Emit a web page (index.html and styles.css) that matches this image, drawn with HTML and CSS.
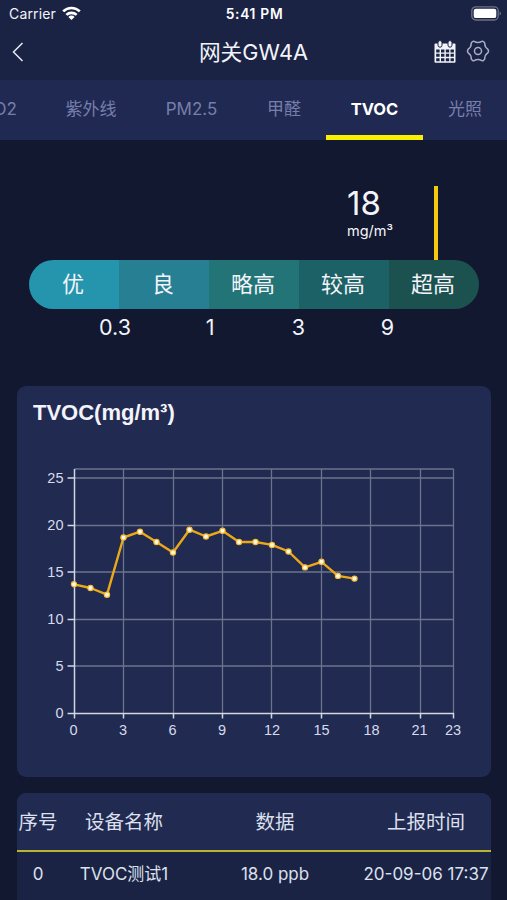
FILE: index.html
```
<!DOCTYPE html>
<html lang="zh-CN">
<head>
    <meta charset="UTF-8">
    <meta name="viewport" content="width=device-width, initial-scale=1.0">
    <title>网关GW4A</title>
    <link rel="stylesheet" href="styles.css">
</head>
<body>
    <header class="header">
        <div class="status-bar">
            <div class="carrier">
                <span>Carrier</span>
                <svg class="wifi" width="19" height="14" viewBox="0 0 19 14" fill="none" stroke="#fff" stroke-width="2.7">
                    <path d="M1.2 5.4a11.8 11.8 0 0 1 16.6 0"/>
                    <path d="M4.4 8.9a7.3 7.3 0 0 1 10.2 0"/>
                    <path d="M9.5 14 6.4 10.9a4.4 4.4 0 0 1 6.2 0z" fill="#fff" stroke="none"/>
                </svg>
            </div>
            <span class="time">5:41 PM</span>
            <svg class="battery" width="31" height="15" viewBox="0 0 31 15">
                <rect x=".8" y=".8" width="26.4" height="13.2" rx="4" fill="none" stroke="#6d7289" stroke-width="1.3"/>
                <rect x="2.7" y="2.7" width="22.6" height="9.4" rx="2.2" fill="#fff"/>
                <path d="M28.6 5.2c1.8.7 1.8 3.7 0 4.4z" fill="#6d7289"/>
            </svg>
        </div>
        <div class="nav-bar">
            <svg class="back" width="12" height="20" viewBox="0 0 12 20" fill="none" stroke="#e8eaf2" stroke-width="1.5">
                <path d="M10.5 1 1.5 10l9 9"/>
            </svg>
            <h1>网关GW4A</h1>
            <div class="actions">
                <svg width="22" height="24" viewBox="0 0 22 24">
                    <path d="M1.5 3.5h19a1 1 0 0 1 1 1v17.3a1 1 0 0 1-1 1h-19a1 1 0 0 1-1-1V4.5a1 1 0 0 1 1-1z" fill="#f3f4fa"/>
                    <g fill="#1b2344">
                        <path d="M2.2 9.4h3.4v3H2.2zM7 9.4h3.4v3H7zM11.8 9.4h3.4v3h-3.4zM16.5 9.4h3.4v3h-3.4z"/>
                        <path d="M2.2 13.8h3.4v3H2.2zM7 13.8h3.4v3H7zM11.8 13.8h3.4v3h-3.4zM16.5 13.8h3.4v3h-3.4z"/>
                        <path d="M2.2 18.2h3.4v3H2.2zM7 18.2h3.4v3H7zM11.8 18.2h3.4v3h-3.4zM16.5 18.2h3.4v3h-3.4z"/>
                    </g>
                    <g fill="#f3f4fa" stroke="#1b2344">
                        <rect x="4" y=".6" width="4" height="6.6" rx="2"/>
                        <rect x="14" y=".6" width="4" height="6.6" rx="2"/>
                    </g>
                </svg>
                <svg class="gear" width="24" height="24" viewBox="0 0 24 24" fill="none" stroke="#a9adc6" stroke-width="1.5" stroke-linejoin="round">
                    <path d="M6.5 2.6Q7.3 2 8.2 2.4Q12 4.6 15.8 2.4Q16.7 2 17.5 2.6Q19 3.5 18.8 5Q18.9 8.2 21.8 10.2Q23.2 12 21.8 13.8Q18.9 15.8 18.8 19Q19 20.5 17.5 21.4Q16.7 22 15.8 21.6Q12 19.4 8.2 21.6Q7.3 22 6.5 21.4Q5 20.5 5.2 19Q5.1 15.8 2.2 13.8Q.8 12 2.2 10.2Q5.1 8.2 5.2 5Q5 3.5 6.5 2.6z"/>
                    <circle cx="12" cy="12" r="3.5"/>
                </svg>
            </div>
        </div>
    </header>

    <nav class="tabs">
        <div class="tab">CO2</div>
        <div class="tab">紫外线</div>
        <div class="tab">PM2.5</div>
        <div class="tab">甲醛</div>
        <div class="tab active">TVOC</div>
        <div class="tab">光照</div>
    </nav>

    <section class="gauge">
        <div class="reading">
            <div class="reading-text">
                <div class="value">18</div>
                <div class="unit">mg/m³</div>
            </div>
            <div class="marker"></div>
        </div>
        <div class="levels">
            <div class="level level-1">优</div>
            <div class="level level-2">良</div>
            <div class="level level-3">略高</div>
            <div class="level level-4">较高</div>
            <div class="level level-5">超高</div>
        </div>
        <div class="limits">
            <span>0.3</span>
            <span>1</span>
            <span>3</span>
            <span>9</span>
        </div>
    </section>

    <section class="card chart-card">
        <h2>TVOC(mg/m³)</h2>
        <svg class="chart" width="474" height="300" viewBox="0 0 474 300">
            <g transform="translate(57.5 19)">
                <!-- grid -->
                <path class="grid" d="M49 0v244M99 0v244M148 0v244M197 0v244M247 0v244M296 0v244M346 0v244M379 0v244M0 0h379M0 9h379M0 56.5h379M0 103h379M0 150.5h379M0 197h379"/>
                <!-- axes -->
                <path class="axis" d="M0 0v249.5M-7 244.5h386.5M-7 9H0M-7 56.5H0M-7 103H0M-7 150.5H0M-7 197H0M49 244v5.5M99 244v5.5M148 244v5.5M197 244v5.5M247 244v5.5M296 244v5.5M346 244v5.5M379 244v5.5"/>
                <g class="label label-y">
                    <text x="-11" y="14">25</text>
                    <text x="-11" y="61">20</text>
                    <text x="-11" y="108">15</text>
                    <text x="-11" y="155">10</text>
                    <text x="-11" y="202">5</text>
                    <text x="-11" y="249">0</text>
                </g>
                <g class="label label-x">
                    <text x="-1" y="266">0</text>
                    <text x="48.5" y="266">3</text>
                    <text x="98" y="266">6</text>
                    <text x="147.5" y="266">9</text>
                    <text x="197.5" y="266">12</text>
                    <text x="247" y="266">15</text>
                    <text x="297" y="266">18</text>
                    <text x="345" y="266">21</text>
                    <text x="378.5" y="266">23</text>
                </g>
                <polyline class="line" points="-.5,115.3 16,119 32.5,125.7 49,68.5 65.5,62.7 82,73 98.5,83.5 115,60.7 131.5,67.5 148,61.8 164.5,73 181,73 197.5,75.9 214,82.5 230.5,98.4 247,92.8 263.5,106.9 280,109.6"/>
                <g class="dots">
                    <circle cx="-.5" cy="115.3" r="2.6"/>
                    <circle cx="16" cy="119" r="2.6"/>
                    <circle cx="32.5" cy="125.7" r="2.6"/>
                    <circle cx="49" cy="68.5" r="2.6"/>
                    <circle cx="65.5" cy="62.7" r="2.6"/>
                    <circle cx="82" cy="73" r="2.6"/>
                    <circle cx="98.5" cy="83.5" r="2.6"/>
                    <circle cx="115" cy="60.7" r="2.6"/>
                    <circle cx="131.5" cy="67.5" r="2.6"/>
                    <circle cx="148" cy="61.8" r="2.6"/>
                    <circle cx="164.5" cy="73" r="2.6"/>
                    <circle cx="181" cy="73" r="2.6"/>
                    <circle cx="197.5" cy="75.9" r="2.6"/>
                    <circle cx="214" cy="82.5" r="2.6"/>
                    <circle cx="230.5" cy="98.4" r="2.6"/>
                    <circle cx="247" cy="92.8" r="2.6"/>
                    <circle cx="263.5" cy="106.9" r="2.6"/>
                    <circle cx="280" cy="109.6" r="2.6"/>
                </g>
            </g>
        </svg>
    </section>

    <section class="card table">
        <div class="row table-head">
            <div>序号</div>
            <div>设备名称</div>
            <div>数据</div>
            <div>上报时间</div>
        </div>
        <div class="row">
            <div>0</div>
            <div>TVOC测试1</div>
            <div>18.0 ppb</div>
            <div>20-09-06 17:37</div>
        </div>
    </section>
</body>
</html>
```
FILE: styles.css
```
* {
    box-sizing: border-box;
}

body {
    margin: 0;
    height: 900px;
    overflow: hidden;
    background-color: #121830;
    color: #f3f4fa;
    font-family: Inter, "Noto Sans CJK SC", sans-serif;
}

svg {
    display: block;
    flex: none;
}

/* Header */
.header {
    height: 80px;
    background-color: #1b2344;
}

.status-bar {
    display: grid;
    grid-template-columns: 1fr auto 1fr;
    align-items: center;
    height: 27px;
    padding: 0 5px 0 9px;
    font-size: 14px;
}

.carrier {
    display: flex;
    align-items: center;
    gap: 6px;
    letter-spacing: 0.15px;
}

.wifi {
    margin-top: -2px;
}

.time {
    padding-right: 2px;
    font-weight: 600;
    font-size: 13.8px;
    letter-spacing: 0.7px;
    color: #fff;
}

.battery {
    justify-self: end;
}

.nav-bar {
    display: grid;
    grid-template-columns: 1fr auto 1fr;
    align-items: center;
    height: 50px;
    padding: 0 17px 0 12px;
}

.nav-bar h1 {
    margin: 0;
    padding-left: 5px;
    font-size: 21.7px;
    font-weight: 400;
    line-height: 50px;
}

.actions {
    display: flex;
    justify-content: flex-end;
    align-items: center;
    gap: 10px;
}

.gear {
    margin-top: -2px;
}

/* Tabs */
.tabs {
    display: grid;
    grid-template-columns: 84px 100px 101px 84px 97px 84px;
    width: 550px;
    height: 60px;
    margin-left: -43px;
    background-color: #202951;
}

.tab {
    height: 60px;
    padding-top: 1px;
    text-align: center;
    font-size: 17px;
    line-height: 57px;
    color: #777eab;
}

.tab.active {
    border-bottom: 5px solid #f8f000;
    font-weight: 700;
    font-size: 16.5px;
    line-height: 56px;
    color: #fff;
}

/* Gauge */
.gauge {
    padding: 46px 28px 0 29px;
}

.reading {
    display: flex;
    justify-content: flex-end;
    height: 74px;
    padding-right: 41px;
}

.reading-text {
    width: 87px;
}

.value {
    font-size: 33px;
    line-height: 34px;
}

.unit {
    margin-top: 2px;
    font-size: 14.5px;
    line-height: 18px;
}

.marker {
    width: 4px;
    background-color: #f5c90d;
}

.levels {
    display: grid;
    grid-template-columns: repeat(5, 1fr);
    height: 49px;
    border-radius: 25px;
    overflow: hidden;
}

.level {
    padding-right: 2px;
    text-align: center;
    font-size: 22px;
    line-height: 49px;
}

.level-1 { background-color: #2594ad; }
.level-2 { background-color: #267f92; }
.level-3 { background-color: #227477; }
.level-4 { background-color: #1c6165; }
.level-5 { background-color: #1b514f; }

.limits {
    display: grid;
    grid-template-columns: 92px 98px 79px 99px;
    padding: 3px 0 0 40px;
    text-align: center;
    font-size: 21.5px;
    line-height: 30px;
}

/* Cards */
.card {
    width: 474px;
    margin-left: 17px;
    border-radius: 9px;
    background-color: #212a51;
    overflow: hidden;
}

.chart-card {
    height: 391px;
    margin-top: 44px;
}

.chart-card h2 {
    margin: 0;
    padding: 12px 16px 0;
    height: 64px;
    font-family: "Liberation Sans", Arial, sans-serif;
    font-size: 22px;
    line-height: 30px;
}

.grid {
    fill: none;
    stroke: #6b748b;
    stroke-width: 1.3;
}

.axis {
    fill: none;
    stroke: #d3d6e4;
    stroke-width: 1.5;
}

.label {
    font-family: "Liberation Sans", Arial, sans-serif;
    font-size: 14.5px;
    fill: #d6dbed;
}

.label-y {
    text-anchor: end;
}

.label-x {
    text-anchor: middle;
}

.line {
    fill: none;
    stroke: #eba91a;
    stroke-width: 2.4;
    stroke-linejoin: round;
}

.dots {
    fill: #fffbe8;
    stroke: #f7bb35;
    stroke-width: 1.2;
}

/* Table */
.table {
    height: 130px;
    margin-top: 16px;
    background-color: #1b2344;
}

.row {
    display: grid;
    grid-template-columns: 42px 130px 172px 130px;
    line-height: 45px;
    text-align: center;
    font-size: 17px;
    white-space: nowrap;
    color: #dde0ee;
}

.table-head {
    height: 59px;
    border-bottom: 2px solid #b9b433;
    background-color: #212a51;
    font-size: 19.5px;
    line-height: 58px;
}
```
